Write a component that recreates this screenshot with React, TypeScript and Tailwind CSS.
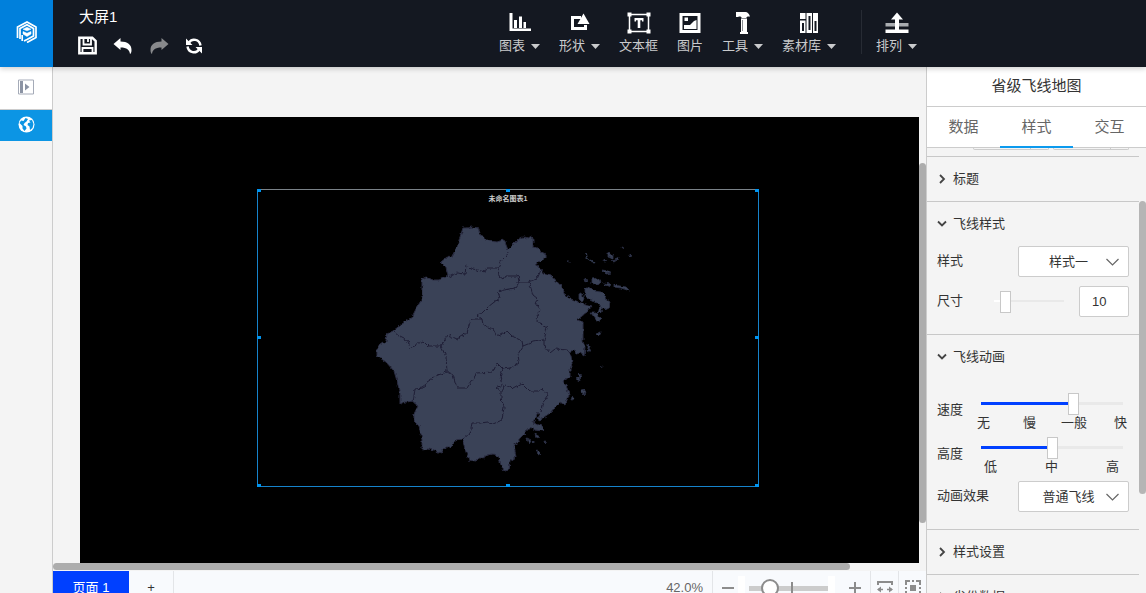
import React from "react";

const Caret = () => (
  <svg width="9" height="5" viewBox="0 0 9 5" aria-hidden="true">
    <path d="M0 0h9L4.500 5z" fill="currentColor" />
  </svg>
);

const ChartIcon = () => (
  <svg width="22" height="22" viewBox="0 0 22 22" fill="#fff">
    <path d="M0.500 1h3v15.500H22V19H0.500zM5 8h3v8H5zM10 4.500h3V16h-3zM14.500 10h2.500v6h-2.500z" />
  </svg>
);
const ShapeIcon = () => (
  <svg width="22" height="22" viewBox="0 0 22 22" fill="#fff">
    <path d="M2 4h10v3H5v8h10v-2h3v5H2z" />
    <path d="M14.500 1.500L20.500 12h-12z" />
  </svg>
);
const TextIcon = () => (
  <svg width="24" height="22" viewBox="0 0 24 22" fill="#fff">
    <path d="M2.500 2.500h19v17h-19z" fill="none" stroke="#fff" strokeWidth="1.500" />
    <path d="M0.500 0.500h4v4h-4zM19.500 0.500h4v4h-4zM0.500 17.500h4v4h-4zM19.500 17.500h4v4h-4zM7.500 6h9v3.500h-1.500V8.300h-1.700V16h-2.600V8.300H9v1.200H7.500z" />
  </svg>
);
const ImageIcon = () => (
  <svg width="22" height="22" viewBox="0 0 22 22" fill="#fff">
    <path fillRule="evenodd" d="M0.500 1h21v20h-21zM3.500 4v14h15V4z" />
    <path d="M5.500 5.500h3.500V9H5.500zM5 17v-4h6l4-4 2.500-1v9z" />
  </svg>
);
const HammerIcon = () => (
  <svg width="22" height="22" viewBox="0 0 22 22" fill="#fff">
    <path d="M4 0h9.500c2 0 3.500 1.500 4.500 4.500h-2.500L14 6h-4L8.500 4.500H6.500V5H4z" />
    <path d="M9 6.500h6V20h1v2H8v-2h1z" />
    <path d="M10.500 8v11" stroke="#8a8d92" />
  </svg>
);
const LibraryIcon = () => (
  <svg width="20" height="22" viewBox="0 0 20 22">
    <path fill="#fff" d="M1 1h5.500v6H1zM1 8.500h5.500V21H1zM7.500 1H13v20H7.500zM14 1h5v20h-5z" />
    <path stroke="#141821" strokeWidth="2" d="M4 11v8M10.500 4v14M16.500 9v10" />
  </svg>
);
const ArrangeIcon = () => (
  <svg width="24" height="22" viewBox="0 0 24 22">
    <path fill="#aaadb1" d="M0.500 11h23v3.500h-23z" />
    <path fill="#fff" d="M0.500 17.500h23V21h-23zM12 0.500l6 7h-4v10h-4v-10H6z" />
  </svg>
);

const tools = [
  { label: "图表", icon: <ChartIcon />, menu: true },
  { label: "形状", icon: <ShapeIcon />, menu: true },
  { label: "文本框", icon: <TextIcon />, menu: false },
  { label: "图片", icon: <ImageIcon />, menu: false },
  { label: "工具", icon: <HammerIcon />, menu: true },
  { label: "素材库", icon: <LibraryIcon />, menu: true },
];

function Tool({ label, icon, menu }: { label: string; icon: React.ReactNode; menu: boolean }) {
  return (
    <button className="flex flex-col items-center gap-0.5 text-[13px] leading-5 text-[#c9cacc]">
      <span className="h-[22px]">{icon}</span>
      <span className="flex items-center gap-1.5 whitespace-nowrap">
        {label}
        {menu && <Caret />}
      </span>
    </button>
  );
}

function Header() {
  return (
    <header className="relative z-10 flex h-[67px] shrink-0 bg-[#141821] shadow-[0_2px_5px_rgba(0,0,0,0.18)]">
      <a href="#home" aria-label="首页" className="flex w-[53px] shrink-0 items-center justify-center bg-[#0080dc] pb-[3px]">
        <svg width="22" height="22" viewBox="0 0 22 22" fill="none" stroke="#fff">
          <path strokeWidth="1.700" d="M1.500 17V6L11 1l9 5v10.500l-9 5M4 18V7.500L11 3.800l6.500 3.700v7.500L11 18.500l-3 1.500M6.200 20v-6" />
          <path fill="#fff" strokeWidth="0.500" d="M7 8.200l4-2 4 2-4 1.600zM7 10.500l4 1.800 4-1.800v2.500L11 15.500 7 13z" />
        </svg>
      </a>
      <div className="flex w-[446px] shrink-0 flex-col gap-2 pt-1.5 pl-[25px]">
        <h1 className="pl-px text-[15px] leading-[22px] text-white">大屏1</h1>
        <div className="flex items-center gap-4 text-white">
          <button aria-label="保存">
            <svg width="19" height="19" viewBox="0 0 19 19" fill="none" stroke="currentColor" strokeWidth="2.400">
              <path d="M1.300 1.800h13L17.700 5v12.200H1.300z" />
              <path d="M5.500 2v6.500h7.500V2M10 3v3M4.500 17v-5h10v5" strokeWidth="1.800" />
            </svg>
          </button>
          <button aria-label="撤销">
            <svg width="20" height="18" viewBox="0 0 20 18" fill="currentColor">
              <path d="M0.500 7L7.500 1v3.500c7 0 11 3 11 8.500 0 2-0.500 3.500-1.500 4-0.500-4-3-6.500-9.500-6.500V13z" />
            </svg>
          </button>
          <button aria-label="重做" className="text-[#88898c]">
            <svg width="20" height="18" viewBox="0 0 20 18" fill="currentColor">
              <path d="M19.500 7l-7-6v3.500c-7 0-11 3-11 8.500 0 2 0.500 3.500 1.500 4 0.500-4 3-6.500 9.500-6.500V13z" />
            </svg>
          </button>
          <button aria-label="刷新">
            <svg width="18" height="18" viewBox="0 0 18 18" fill="none" stroke="currentColor" strokeWidth="2.400">
              <path d="M4 5.500C7 1 14.500 2 15.500 8.500M2.500 9.500c1 6.500 8.500 7.500 11.500 3" />
              <path d="M1 1.500V8h6.500zM17 16.500V10h-6.500z" fill="currentColor" stroke="none" />
            </svg>
          </button>
        </div>
      </div>
      <nav className="flex items-start gap-[19px] pt-3">
        {tools.map((t) => (
          <Tool key={t.label} {...t} />
        ))}
      </nav>
      <div className="mt-2.5 ml-[25px] h-11 w-px bg-[#272b34]" />
      <div className="pt-3 pl-3.5">
        <Tool label="排列" icon={<ArrangeIcon />} menu />
      </div>
    </header>
  );
}

function Rail() {
  return (
    <aside className="flex w-[53px] shrink-0 flex-col border-r border-[#ccc] bg-[#f4f4f4]">
      <button aria-label="展开" className="flex h-[43px] items-center justify-center border-b border-[#ccc] bg-white pb-0.5">
        <svg width="16" height="16" viewBox="0 0 16 16">
          <path d="M0.500 1h15v14h-15z" fill="none" stroke="#a5abb8" />
          <path d="M2 2h3v12H2zM7 4.500l4.500 3.500L7 11.500z" fill="#8b93a3" />
        </svg>
      </button>
      <button aria-label="地图" className="flex h-[31px] items-center justify-center bg-[#0c95e4] pb-0.5">
        <svg width="17" height="17" viewBox="0 0 17 17">
          <circle cx="8.500" cy="8.500" r="8" fill="#fff" />
          <path d="M7.500 2l2.500 1-1.500 2.500L6.500 7 5.500 9l2.500 1.500 0.500 2L6.500 15 4.500 12.500V10L1.500 7 3 4.500 5.500 5zM11 4.500l3-0.500 1.500 4-1 4-2.500 2-0.500-3.500L9.500 9l0.500-2 2.500-0.500z" fill="#0c95e4" />
        </svg>
      </button>
    </aside>
  );
}

const province =
  "M463 228l4 0 5-1 6 1 2 5 4 5 5 3 8 1 3-1 4-1 4 10 3-3 8-8 4-2 5 1 4-2 1 3 0 8 5 1 3 4 5 2 0 4-6 3-4 3 4 5 3 4 8 2 9 10 6 10 5 4 10 4 11 3-5 6-10 8 6 2 0 11 0 9 2 5-1 9-4-3-4 1-2-4-6 2 3 4 1 7 1 4-3 2 0 8-7 4 4 7 2 7-4 10-5-3-5 5-5 6-9 6-3-7-5 11 9 3 1 5-8-1-5-3-5 6-5 5-6 8 2 11-6 4-1 9-5 1-3-6-2-8-6-3-5 1-5 3-4 0-3 3-7-1-3-8-2-7-2-6-6 1-5 7-5 0-5 6-7-3-6-1-6 1 0-11-3-13-5-5 0-7 4-8-6-5-5 1-3 0-4 2 0-10-3-13-3-10-8-9-9-6 0-9 9-6 1-7 6-3 9-7 10-7 4-8 6-10 0-10 0-10 4-2 7 3 6 0 9-4-2-9-5-5 6-5 4 1 6-11 3-10z";
const borders =
  "M449 277l8-4 8 1 1-9 7 4 12 3 2-4 11 0 4-8 5-5 1-3M498 268l1 8 4 3 2-3 13 0 1 6-4 6-12 2-5 2 2 6-7 5-5 4-6 6-5 2 5 4 1 6 10 4 4 8 10-6 5 5 10 5 1 5 10-4 11-2 3-12-5-3-6-7 4-8-5-7 3-4-5-4-4-13-9 0-2-6M529 282l8-3 4-9M544 340l0 6 6 7 5-4 12 1 3 2M523 346l-5 8 1 8-9 6-7 1-6-6-4 9-16 1-10 15-10 0-4-13-6-3-9 3-11 7-4 6-8 1-2 13M447 372l-1-15-5-11-13 0-5-5-13 7-2-7-8-4-6-5M441 346l7-11 9 4 10-6 3-11 2-3 10 0M503 369l-3 8 2 8-5 3 4 3 4-6 8 3 9-5 8 8 8 0 4-3 6 8-6 9-1 7M501 391l0 7 3 9-2 13-9 4-5-2-8 1-8 0-2 10-7 6";
const islands =
  "M585 288l4 0 5 3 7 1 5 5 1 4 3 2-1 5-4 2-3-3-5-4-5-3-7-3zM579 294l3-1 2 6-2 3-3-3zM592 279l6-1 3 5-5 2-4-2zM584 279l4 1-3 2zM602 270l6 1 3 2-5 1zM591 313l6 0 1 4 3 3-4 1zM600 306l3 2-3 6-2-2zM604 283l6 1-1 2-5-1zM608 253l5 2 0 4-5-2zM629 254l3 2-3 1zM615 259l4-2-1 3zM603 260l4 1-3 1zM611 261l5-1-3 2zM621 247l3 1-2 1zM614 285l12 2 4 4-9-3-7-1zM596 334l4-2-2 5zM588 344l3 4-3 2zM587 350l4 0-3 2zM578 374l4 1-3 3zM576 379l3-2 1 4zM581 391l4-1-1 5zM572 396l2 3-3 1zM600 367l2-1-1 2zM527 438l4 2-2 3zM535 434l5 3-4 1zM537 451l4 2-3 2zM544 441l3 1-2 2zM532 442l2-1 0 2zM567 261l2 0 0 1zM538 416l4 3-3 2z";

function FlyLineMap() {
  return (
    <svg viewBox="258 190 500 296" className="absolute inset-0 h-full w-full" role="img" aria-label="地图">
      <defs>
        <filter id="coast" x="-5%" y="-5%" width="110%" height="110%" colorInterpolationFilters="sRGB">
          <feTurbulence type="fractalNoise" baseFrequency="0.25" numOctaves="2" seed="4" />
          <feDisplacementMap in="SourceGraphic" scale="4" xChannelSelector="R" yChannelSelector="G" />
        </filter>
      </defs>
      <g filter="url(#coast)" strokeLinejoin="round">
        <path d={province} fill="#3a4257" stroke="#2a2c42" strokeWidth="1" />
        <path d={islands} fill="#3a4257" stroke="#2c3148" strokeWidth="0.800" />
        <path d="M586 252l1 6 7 5" fill="none" stroke="#323a50" strokeWidth="1.500" />
        <path d={borders} fill="none" stroke="#1e1d35" strokeWidth="1" />
      </g>
    </svg>
  );
}

const handles = [
  "-top-px -left-px",
  "-top-px left-[248px]",
  "-top-px -right-px",
  "top-[146px] -left-px",
  "top-[146px] -right-px",
  "-bottom-px -left-px",
  "-bottom-px left-[248px]",
  "-bottom-px -right-px",
];

function Stage() {
  return (
    <main className="flex min-w-0 flex-1 flex-col bg-[#f4f4f4]">
      <div className="flex min-h-0 flex-1">
        <div className="flex min-w-0 flex-1 pt-[50px] pl-[27px]">
          <div className="relative flex-1 overflow-hidden bg-black">
            <section className="absolute top-[72px] left-[177px] h-[298px] w-[502px] border border-[#1683cb] border-t-[#7a8288]">
              <FlyLineMap />
              <h2 className="relative pt-1 text-center text-[7px] leading-[10px] font-bold text-[#ccc]">未命名图表1</h2>
              {handles.map((place) => (
                <span key={place} className={`absolute h-[3px] w-1 bg-[#0094f0] ${place}`} />
              ))}
            </section>
          </div>
        </div>
        <div className="w-[7px] pt-24">
          <div className="h-[360px] rounded-full bg-[#adadad]" />
        </div>
      </div>
      <div className="h-2 shrink-0">
        <div className="mr-[76px] h-[7px] rounded-full bg-[#adadad]" />
      </div>
      <footer className="h-[22px] shrink-0 overflow-hidden bg-[#f8fafd] text-[13px]">
        <div className="flex h-[34px] items-stretch">
          <button className="w-[76px] bg-[#0040ff] text-white">页面 1</button>
          <button aria-label="新建页面" className="w-[45px] border-r border-[#e3e5e8] text-[#333]">+</button>
          <div className="flex flex-1 items-center justify-end border-r border-[#e3e5e8] pr-[9px] text-[#666]">42.0%</div>
          <div className="flex w-[158px] items-center justify-between border-r border-[#e3e5e8] px-[9px]">
            <button aria-label="缩小">
              <svg width="12" height="12"><path d="M0 6h12" stroke="#8c8c8c" strokeWidth="2" /></svg>
            </button>
            <div className="mr-2.5 flex items-center">
              <span className="mr-1 h-6 w-[7px] bg-white" />
              <input
                type="range"
                aria-label="缩放"
                defaultValue={20}
                className="h-[18px] w-[79px] appearance-none bg-[linear-gradient(#8c8c8c,#8c8c8c),linear-gradient(#ccc,#ccc)] bg-[length:2px_12px,100%_5px] bg-[position:54%_50%,0_50%] bg-no-repeat [&::-webkit-slider-thumb]:size-[18px] [&::-webkit-slider-thumb]:appearance-none [&::-webkit-slider-thumb]:rounded-full [&::-webkit-slider-thumb]:border-2 [&::-webkit-slider-thumb]:border-[#8c8c8c] [&::-webkit-slider-thumb]:bg-white"
              />
              <span className="h-6 w-[7px] bg-white" />
            </div>
            <button aria-label="放大">
              <svg width="12" height="12"><path d="M0 6h12M6 0v12" stroke="#8c8c8c" strokeWidth="2" /></svg>
            </button>
          </div>
          <button aria-label="适应宽度" className="flex w-7 items-center justify-center border-r border-[#e3e5e8]">
            <svg width="16" height="14" viewBox="0 0 16 14" fill="none" stroke="#8c8c8c">
              <path d="M1 4V1h14v3" strokeWidth="2" />
              <path d="M1 8.500h5M10 8.500h5" strokeWidth="1.500" />
              <path d="M0 8.500L4 5.500v6zM16 8.500l-4-3v6z" fill="#8c8c8c" stroke="none" />
            </svg>
          </button>
          <button aria-label="适应屏幕" className="flex w-[27px] items-center justify-center">
            <svg width="16" height="16" viewBox="0 0 16 16" fill="none" stroke="#8c8c8c" strokeWidth="2">
              <path d="M1 5V1h4M11 1h4v4M15 11v4h-4M5 15H1v-4M7 1h2M7 15h2M1 7v2M15 7v2" />
              <path d="M6 6h4v4H6z" fill="#8c8c8c" />
            </svg>
          </button>
        </div>
      </footer>
    </main>
  );
}

function Section({ title, open, children }: { title: string; open?: boolean; children?: React.ReactNode }) {
  return (
    <section className="border-t border-[#c8c8c8]">
      <button aria-expanded={!!open} className="flex h-11 w-full items-center gap-1.5 pl-2.5">
        <svg width="10" height="10" viewBox="0 0 10 10" fill="none" stroke="#444" strokeWidth="1.800">
          <path d={open ? "M1 2.500L5 6.500 9 2.500" : "M3 1L7 5 3 9"} />
        </svg>
        {title}
      </button>
      {children}
    </section>
  );
}

function SelectRow({ id, label, value, options }: { id: string; label: string; value: string; options: string[] }) {
  return (
    <div className="flex h-[31px] items-center justify-between">
      <label htmlFor={id} className="pb-0.5">{label}</label>
      <div className="relative">
        <select
          id={id}
          defaultValue={value}
          className="h-[31px] w-[111px] appearance-none rounded-[2px] border border-[#ccc] bg-white pr-2.5 text-center"
        >
          {options.map((o) => (
            <option key={o}>{o}</option>
          ))}
        </select>
        <svg className="pointer-events-none absolute top-3 right-2.5" width="13" height="8" viewBox="0 0 13 8" fill="none" stroke="#666" strokeWidth="1.200">
          <path d="M0.500 1l6 6 6-6" />
        </svg>
      </div>
    </div>
  );
}

const thumb =
  "[&::-webkit-slider-thumb]:h-[22px] [&::-webkit-slider-thumb]:w-[11px] [&::-webkit-slider-thumb]:appearance-none [&::-webkit-slider-thumb]:border [&::-webkit-slider-thumb]:border-[#c8c8c8] [&::-webkit-slider-thumb]:bg-white";

function Panel() {
  return (
    <aside className="flex w-[220px] shrink-0 flex-col border-l border-[#ccc] bg-[#f4f4f4] text-[13px] text-[#333]">
      <h2 className="flex h-10 shrink-0 items-center justify-center border-b border-[#ccc] bg-white text-[15px]">省级飞线地图</h2>
      <div role="tablist" className="grid h-[41px] shrink-0 grid-cols-3 border-b border-[#ccc] bg-white text-[15px] text-[#666]">
        <button role="tab">数据</button>
        <button role="tab" aria-selected="true" className="shadow-[inset_0_-1px_0_#0c9aee,0_1px_0_#0c9aee]">样式</button>
        <button role="tab">交互</button>
      </div>
      <div className="flex min-h-0 flex-1 overflow-hidden">
        <div className="min-w-0 flex-1">
          <div className="flex h-2 justify-end gap-1 pr-2.5">
            {[0, 1].map((n) => (
              <div key={n} className="flex h-0.5 w-[76px] rounded-b-[2px] border-x border-b border-[#ccc]">
                <span className="ml-auto w-[18px] border-l border-[#ccc]" />
              </div>
            ))}
          </div>
          <Section title="标题" />
          <Section title="飞线样式" open>
            <div className="flex flex-col gap-[9px] pr-2.5 pb-[17px] pl-2.5">
              <SelectRow id="line-style" label="样式" value="样式一" options={["样式一", "样式二"]} />
              <div className="flex h-[31px] items-center">
                <label htmlFor="line-size" className="w-[57px] pb-0.5">尺寸</label>
                <input
                  id="line-size"
                  type="range"
                  defaultValue={10}
                  className={`h-[22px] w-[70px] appearance-none bg-[linear-gradient(90deg,#fff_10%,#e9e9e9_10%)] bg-[length:100%_2px] bg-[position:0_9px] bg-no-repeat ${thumb}`}
                />
                <input
                  aria-label="尺寸数值"
                  defaultValue="10"
                  className="ml-auto h-[31px] w-[50px] rounded-[2px] border border-[#ccc] bg-white pl-3"
                />
              </div>
            </div>
          </Section>
          <Section title="飞线动画" open>
            <div className="pt-3.5 pr-2.5 pb-[17px] pl-2.5">
              <div className="flex h-11 gap-[11px]">
                <label htmlFor="speed" className="pt-1.5 pr-1.5 leading-[22px]">速度</label>
                <div className="-ml-1.5 flex-1">
                  <input
                    id="speed"
                    type="range"
                    max={3}
                    defaultValue={2}
                    className={`ml-[7px] block h-[22px] w-[142px] appearance-none bg-[linear-gradient(90deg,#0040ff_66%,#e9e9e9_66%)] bg-[length:100%_3px] bg-[position:0_9px] bg-no-repeat ${thumb}`}
                  />
                  <div className="ml-[3px] flex pr-0.5 leading-4">
                    <span className="w-[46px]">无</span>
                    <span className="w-[38px]">慢</span>
                    <span>一般</span>
                    <span className="ml-auto">快</span>
                  </div>
                </div>
              </div>
              <div className="flex h-11 gap-[11px]">
                <label htmlFor="height" className="pt-1.5 pr-1.5 leading-[22px]">高度</label>
                <div className="-ml-1.5 flex-1">
                  <input
                    id="height"
                    type="range"
                    max={2}
                    defaultValue={1}
                    className={`ml-[7px] block h-[22px] w-[142px] appearance-none bg-[linear-gradient(90deg,#0040ff_50%,#e9e9e9_50%)] bg-[length:100%_3px] bg-[position:0_9px] bg-no-repeat ${thumb}`}
                  />
                  <div className="flex justify-between pr-2.5 pl-2.5 leading-4">
                    <span>低</span>
                    <span>中</span>
                    <span>高</span>
                  </div>
                </div>
              </div>
              <SelectRow id="effect" label="动画效果" value="普通飞线" options={["普通飞线", "光点飞线"]} />
            </div>
          </Section>
          <Section title="样式设置" />
          <Section title="省份数据" />
        </div>
        <div className="w-[7px] shrink-0 pt-[53px]">
          <div className="h-[293px] rounded-full bg-[#b5b5b5]" />
        </div>
      </div>
    </aside>
  );
}

export default function App() {
  return (
    <div className="flex h-screen flex-col overflow-hidden bg-[#f4f4f4] font-['Liberation_Sans','Noto_Sans_CJK_SC',sans-serif]">
      <Header />
      <div className="flex min-h-0 flex-1">
        <Rail />
        <Stage />
        <Panel />
      </div>
    </div>
  );
}
